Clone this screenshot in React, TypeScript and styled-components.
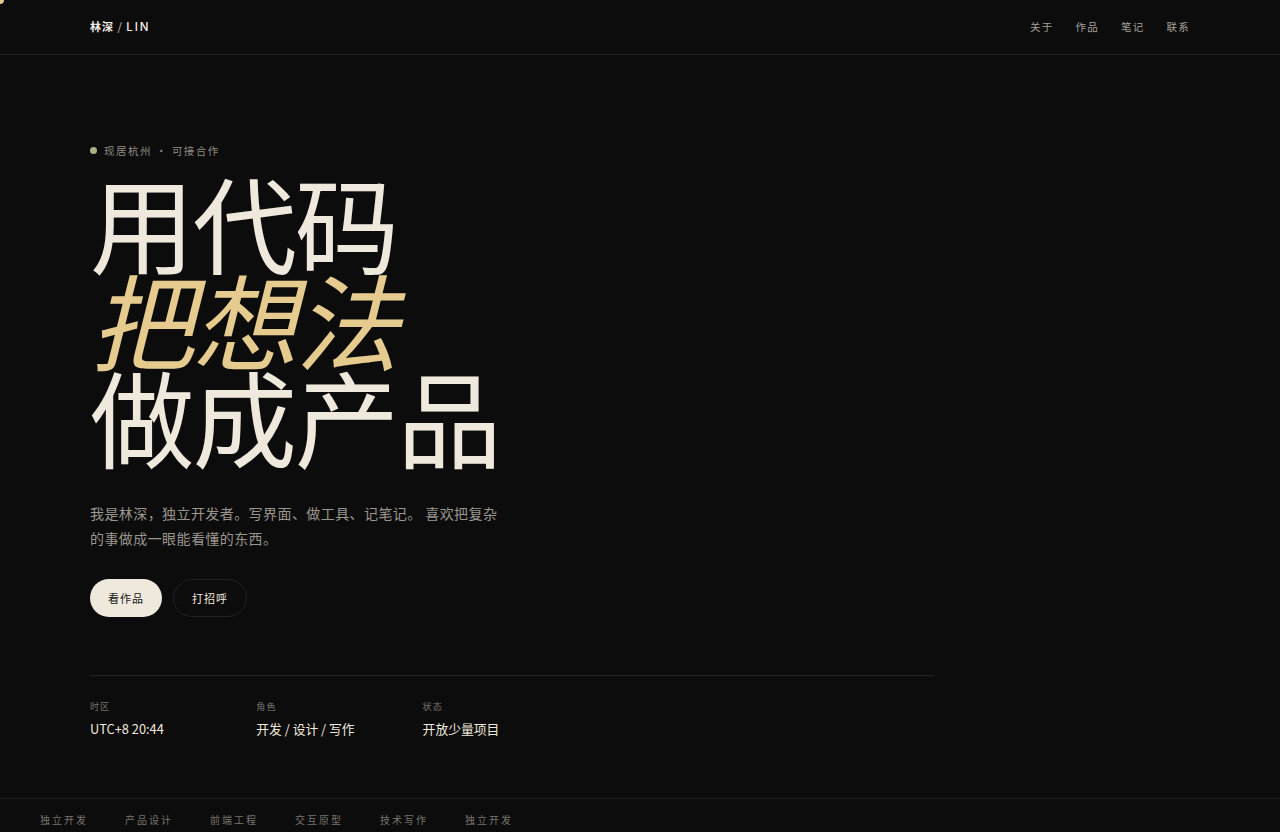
import styled, { createGlobalStyle } from 'styled-components';

const GlobalStyle = createGlobalStyle`
  * {
    box-sizing: border-box;
  }
  html,
  body {
    margin: 0;
    height: 100%;
    background: #0d0c0c;
  }
  body {
    font-family: 'Noto Sans CJK SC', 'Noto Sans', sans-serif;
    overflow: hidden;
  }
`;

const Page = styled.div`
  position: relative;
  display: flex;
  flex-direction: column;
  height: 832px;
  overflow: hidden;
  background: #0d0c0c;
  color: #efe9dd;
`;

const CursorDot = styled.div`
  position: absolute;
  top: -4px;
  left: -4px;
  width: 8px;
  height: 8px;
  border-radius: 50%;
  background: #e6cb8f;
`;

const Nav = styled.header`
  display: flex;
  align-items: center;
  justify-content: space-between;
  height: 55px;
  padding: 0 90px 2px;
  border-bottom: 1px solid #242321;
`;

const Logo = styled.div`
  font-size: 11px;
  font-weight: 700;
  letter-spacing: 0.09em;
  color: #f2ede3;
`;

const LogoSlash = styled.span`
  font-weight: 400;
  color: #d8c79f;
`;

const LogoLatin = styled.span`
  font-family: 'Inter', sans-serif;
  font-size: 11.5px;
  font-weight: 500;
  letter-spacing: 0.17em;
`;

const NavLinks = styled.nav`
  display: flex;
  gap: 22px;
`;

const NavLink = styled.a`
  font-size: 10.5px;
  letter-spacing: 0.12em;
  color: #a5a199;
`;

const Hero = styled.main`
  flex: 1;
  padding: 86px 90px 0;
`;

const Eyebrow = styled.div`
  display: flex;
  align-items: center;
  height: 18px;
  font-size: 10.5px;
  letter-spacing: 0.14em;
  color: #8f8b83;
`;

const StatusDot = styled.span`
  width: 7px;
  height: 7px;
  margin-right: 7px;
  border-radius: 50%;
  background: #a9b184;
`;

const Separator = styled.span`
  margin: 0 4px;
`;

const Title = styled.h1`
  margin: 13px 0 0;
  font-family: 'Noto Sans CJK SC', sans-serif;
  font-size: 104.5px;
  font-weight: 400;
  line-height: 97px;
  letter-spacing: -0.02em;
  color: #efe9dd;
`;

const TitleLine = styled.span<{ $accent?: boolean }>`
  display: block;
  color: ${(p) => (p.$accent ? '#e6cb8f' : 'inherit')};
  font-style: ${(p) => (p.$accent ? 'italic' : 'normal')};
`;

const Intro = styled.p`
  width: 420px;
  margin: 38px 0 0;
  font-size: 14px;
  line-height: 25px;
  letter-spacing: 0.03em;
  color: #9a968e;
`;

const Actions = styled.div`
  display: flex;
  gap: 11px;
  margin-top: 28px;
`;

const Button = styled.a<{ $solid?: boolean }>`
  display: flex;
  align-items: center;
  justify-content: center;
  height: 38px;
  padding: 0 18px;
  border-radius: 19px;
  border: ${(p) => (p.$solid ? 'none' : '1px solid #232220')};
  background: ${(p) => (p.$solid ? '#efe9dd' : 'transparent')};
  color: ${(p) => (p.$solid ? '#141414' : '#efe9dd')};
  font-size: 11px;
  letter-spacing: 0.09em;
`;

const Stats = styled.div`
  display: grid;
  grid-template-columns: repeat(3, 166.3px);
  width: 844px;
  margin-top: 58px;
  padding-top: 23px;
  border-top: 1px solid #242321;
`;

const Stat = styled.div`
  display: flex;
  flex-direction: column;
  gap: 4px;
`;

const StatLabel = styled.div`
  font-size: 9px;
  line-height: 15px;
  letter-spacing: 0.12em;
  color: #78756e;
`;

const StatValue = styled.div`
  font-size: 12.8px;
  line-height: 22px;
  color: #efe9dd;
`;

const Marquee = styled.footer`
  display: flex;
  gap: 37px;
  height: 34px;
  padding: 13px 40px 0;
  border-top: 1px solid #1e1d1c;
  white-space: nowrap;
`;

const MarqueeItem = styled.span`
  font-size: 10px;
  line-height: 16px;
  letter-spacing: 0.2em;
  color: #77746d;
`;

const marqueeItems = ['独立开发', '产品设计', '前端工程', '交互原型', '技术写作', '独立开发'];

function App() {
  return (
    <Page>
      <GlobalStyle />
      <CursorDot />
      <Nav>
        <Logo>
          林深 <LogoSlash>/</LogoSlash> <LogoLatin>LIN</LogoLatin>
        </Logo>
        <NavLinks>
          <NavLink>关于</NavLink>
          <NavLink>作品</NavLink>
          <NavLink>笔记</NavLink>
          <NavLink>联系</NavLink>
        </NavLinks>
      </Nav>
      <Hero>
        <Eyebrow>
          <StatusDot />
          现居杭州
          <Separator>·</Separator>
          可接合作
        </Eyebrow>
        <Title>
          <TitleLine>用代码</TitleLine>
          <TitleLine $accent>把想法</TitleLine>
          <TitleLine>做成产品</TitleLine>
        </Title>
        <Intro>我是林深，独立开发者。写界面、做工具、记笔记。 喜欢把复杂的事做成一眼能看懂的东西。</Intro>
        <Actions>
          <Button $solid>看作品</Button>
          <Button>打招呼</Button>
        </Actions>
        <Stats>
          <Stat>
            <StatLabel>时区</StatLabel>
            <StatValue>UTC+8 20:44</StatValue>
          </Stat>
          <Stat>
            <StatLabel>角色</StatLabel>
            <StatValue>开发 / 设计 / 写作</StatValue>
          </Stat>
          <Stat>
            <StatLabel>状态</StatLabel>
            <StatValue>开放少量项目</StatValue>
          </Stat>
        </Stats>
      </Hero>
      <Marquee>
        {marqueeItems.map((item, i) => (
          <MarqueeItem key={i}>{item}</MarqueeItem>
        ))}
      </Marquee>
    </Page>
  );
}

export default App;
